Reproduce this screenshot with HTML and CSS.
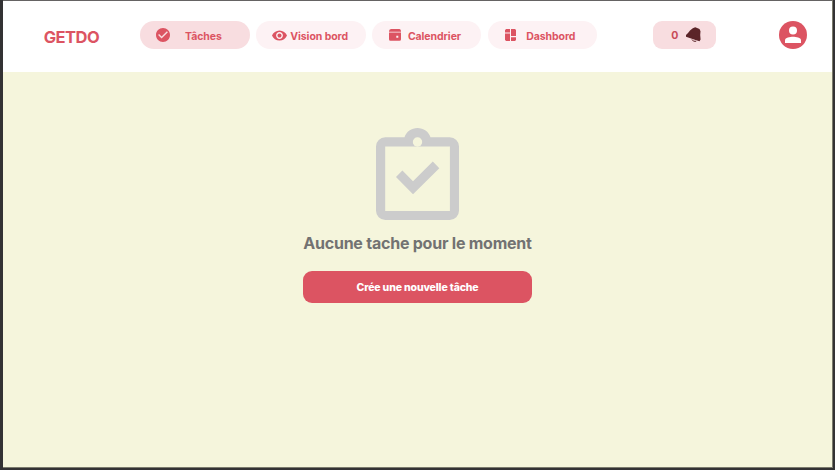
FILE: index.html
```html
<!DOCTYPE html>
<html lang="fr">
<head>
<meta charset="utf-8">
<title>GETDO</title>
<link rel="stylesheet" href="styles.css">
</head>
<body>
<div class="app">
  <header class="header">
    <div class="logo">GETDO</div>
    <nav class="nav">
      <a class="tab tab-tasks active">
        <svg class="icon-check" viewBox="2 2 20 20"><path d="M12 2C6.48 2 2 6.48 2 12s4.480 10 10 10 10-4.480 10-10S17.520 2 12 2zm-2 15l-5-5 1.410-1.410L10 14.170l7.590-7.590L19 8l-9 9z"/></svg>
        <span>Tâches</span>
      </a>
      <a class="tab tab-vision">
        <svg class="icon-eye" viewBox="1 4.500 22 15"><path d="M12 4.500C7 4.500 2.730 7.610 1 12c1.730 4.390 6 7.500 11 7.500s9.270-3.110 11-7.500c-1.730-4.390-6-7.500-11-7.500zM12 17c-2.760 0-5-2.240-5-5s2.240-5 5-5 5 2.240 5 5-2.240 5-5 5zm0-8c-1.660 0-3 1.340-3 3s1.340 3 3 3 3-1.340 3-3-1.340-3-3-3z"/></svg>
        <span>Vision bord</span>
      </a>
      <a class="tab tab-calendar">
        <svg class="icon-calendar" viewBox="0 0 12 12"><path d="M2 0H10.500Q12 .3 12 2.200V2.700H0V2.200Q0 .3 2 0z"/><path fill-rule="evenodd" d="M0 3.600H12V10.300Q12 11.800 10.500 11.800H1.500Q0 11.800 0 10.300zM7.300 6.700V8.700H9.300V6.700z"/></svg>
        <span>Calendrier</span>
      </a>
      <a class="tab tab-dashboard">
        <svg class="icon-dashboard" viewBox="0 0 11 12"><path d="M1 0H5V3.500H0V1.200zM6 0H10L11 1V7H6zM0 4.600H5V12H1.200L0 11zM6 8.200H11V11L10 12H6z"/></svg>
        <span>Dashbord</span>
      </a>
    </nav>
    <div class="notifications">
      <span>0</span>
      <svg class="icon-bell" viewBox="0 0 15 16"><path d="M6.800 1.200L9.200.3 10.500.8 13.500 2.100 14.500 4.300 14.200 8 14.600 12.500 13.500 14.200 9.500 13 0 9.700V8L2 6 4 3.500z"/><path class="clapper" d="M6 12.500Q7 15 10.200 14.300"/></svg>
    </div>
    <svg class="avatar" viewBox="0 0 28 28"><circle cx="14" cy="14" r="14"/><circle class="cut" cx="14" cy="9.500" r="4"/><path class="cut" d="M6 21.900V19.300C6 16.700 11 15.800 14 15.800S22 16.700 22 19.300V21.900z"/></svg>
  </header>
  <main class="empty">
    <svg class="clipboard" viewBox="0 0 83 92"><path fill-rule="evenodd" d="M9.200 9.200H28.500C30.300 3.700 35.500 0 41.500 0S52.700 3.700 54.500 9.200H73.800A9.200 9.200 0 0 1 83 18.400V82.800A9.200 9.200 0 0 1 73.800 92H9.200A9.200 9.200 0 0 1 0 82.800V18.400A9.200 9.200 0 0 1 9.200 9.200zM9.200 18.400V82.900H73.900V18.400z"/><circle class="hole" cx="41.500" cy="14" r="4.700"/><path d="M20 49L26.400 42.600 37 53.200 56.800 33.600 63.300 40.200 37 66.200z"/></svg>
    <h1 class="message">Aucune tache pour le moment</h1>
    <button class="create">Crée une nouvelle tâche</button>
  </main>
</div>
</body>
</html>
```
FILE: styles.css
```css
* { box-sizing: border-box; }
body {
  margin: 0;
  height: 470px;
  overflow: hidden;
  background: #333234;
  font-family: Inter, sans-serif;
  font-weight: 700;
}
svg { display: block; flex: none; fill: #dc5462; }
.app {
  height: 468px;
  margin: 0 2px 0 3px;
  background: #f5f5dc;
  border-top: 1px solid #656363;
  border-right: 1px solid #7b7b6d;
  border-bottom: 1px solid #7b7b6d;
}
.header {
  display: flex;
  align-items: flex-start;
  height: 71px;
  padding-top: 20px;
  background: #fff;
  color: #dc5462;
  white-space: nowrap;
}
.logo {
  width: 96.300px;
  margin-left: 40.700px;
  font-size: 16.500px;
  line-height: 33px;
  letter-spacing: -0.500px;
}
.nav { display: flex; gap: 6.300px; margin-left: 0.300px; }
.tab {
  display: flex;
  align-items: center;
  width: 109.500px;
  height: 28px;
  border-radius: 14px;
  background: #fdf2f4;
  font-size: 10.500px;
  letter-spacing: -0.070px;
}
.tab span { line-height: 28px; padding-top: 3px; }
.active { background: #f8dde0; }
.icon-check { width: 14px; height: 14px; margin: 0 15px 0 15.700px; }
.icon-eye { width: 15px; height: 11px; margin: 0 3.500px 0 15.700px; }
.icon-calendar { width: 12px; height: 12px; margin: 0 7px 0 17px; }
.icon-dashboard { width: 11px; height: 12px; margin: 0 10px 0 17.500px; }
.notifications {
  display: flex;
  align-items: center;
  width: 62.500px;
  height: 28px;
  margin-left: 56px;
  padding-left: 18px;
  border-radius: 9px;
  background: #f8dde0;
  color: #c94b59;
  font-size: 10.500px;
}
.notifications span { width: 15px; }
.icon-bell { width: 15px; height: 16px; fill: #5b2529; }
.clapper { fill: none; stroke: #5b2529; stroke-width: 1; }
.avatar { width: 28px; height: 28px; margin-left: 63.400px; }
.cut { fill: #fff; }
.empty {
  display: flex;
  flex-direction: column;
  align-items: center;
  padding-top: 56px;
}
.clipboard { width: 83px; height: 92px; fill: #ccc; }
.hole { fill: #f5f5dc; }
.message {
  margin: 11px 0 16px;
  color: #727272;
  font-size: 16px;
  line-height: 24px;
  letter-spacing: -0.230px;
  white-space: nowrap;
}
.create {
  width: 229px;
  height: 32px;
  padding: 0;
  border: 0;
  border-radius: 9px;
  background: #dc5462;
  color: #fff;
  font: 800 10.500px Inter, sans-serif;
  letter-spacing: -0.140px;
}
```
